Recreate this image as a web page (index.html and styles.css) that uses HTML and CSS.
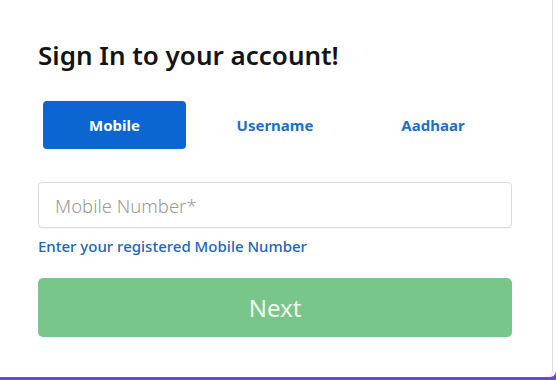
FILE: index.html
```html
<!DOCTYPE html>
<html>
<head>
<meta charset="utf-8">
<link rel="stylesheet" href="styles.css">
</head>
<body>
<div class="page">
  <div class="card">
    <h1 class="title">Sign In to your account!</h1>
    <div class="tabs">
      <div class="tab active">Mobile</div>
      <div class="tab">Username</div>
      <div class="tab">Aadhaar</div>
    </div>
    <div class="field">
      <input class="input" type="text" placeholder="Mobile Number*">
    </div>
    <div class="hint">Enter your registered Mobile Number</div>
    <button class="next">Next</button>
  </div>
</div>
</body>
</html>
```

FILE: styles.css
```css
* { box-sizing: border-box; }
html, body { margin: 0; padding: 0; }
body {
  width: 556px;
  height: 380px;
  background: #6b45dc;
  font-family: "Noto Sans", "Open Sans", sans-serif;
  overflow: hidden;
}
.page {
  height: 377px;
  background: #ffffff;
  border-radius: 0 0 6px 0;
  padding-right: 3px;
}
.card {
  height: 100%;
  background: #fff;
  border-right: 1px solid #dcdcdc;
  border-radius: 0 0 6px 6px;
  padding: 37px 40px 0 38px;
}
.title {
  margin: 0;
  font-size: 26px;
  font-weight: 600;
  color: #141414;
  line-height: 36px;
}
.tabs {
  display: grid;
  grid-template-columns: 1fr 1fr 1fr;
  margin-top: 28px;
  height: 48px;
}
.tab {
  display: flex;
  align-items: center;
  justify-content: center;
  font-size: 15px;
  font-weight: 700;
  color: #1d6fc8;
}
.tab.active {
  background: #0b66d1;
  color: #fff;
  border-radius: 4px;
  margin: 0 10px 0 5px;
}
.field { margin-top: 33px; }
.input {
  width: 100%;
  height: 46px;
  border: 1px solid #dcdcdc;
  border-radius: 4px;
  padding: 0 16px;
  font-family: "Noto Sans", sans-serif;
  font-size: 18.5px;
  font-weight: 300;
  color: #333;
  outline: none;
  box-shadow: 0 1px 1px rgba(0,0,0,0.05);
}
.input::placeholder { color: #9a9a9a; }
.hint {
  margin-top: 8px;
  font-size: 15px;
  font-weight: 500;
  color: #2166b4;
  line-height: 20px;
}
.next {
  display: block;
  width: 100%;
  height: 59px;
  margin-top: 22px;
  border: none;
  border-radius: 5px;
  background: #78c68a;
  color: #eef9ee;
  font-family: "Noto Sans", sans-serif;
  font-size: 24px;
  font-weight: 400;
}
```
